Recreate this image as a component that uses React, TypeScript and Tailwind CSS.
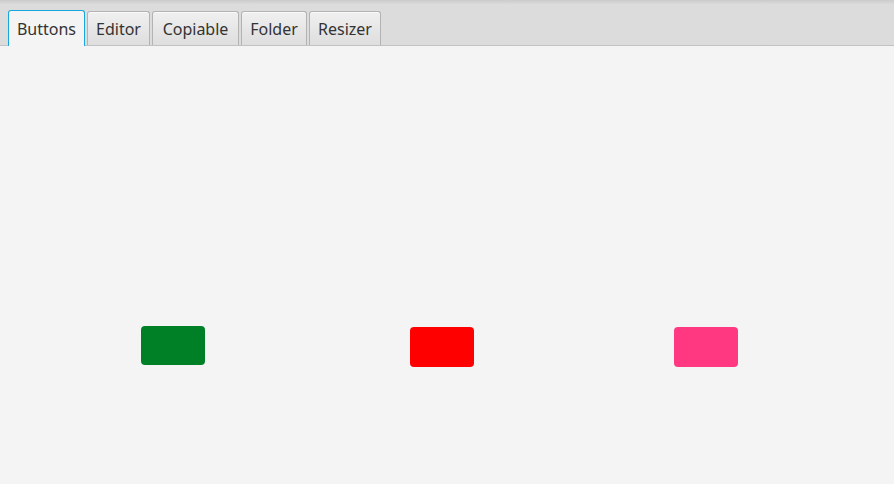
import React from "react";

const tabs = [
  { label: "Buttons", w: 77, active: true },
  { label: "Editor", w: 63 },
  { label: "Copiable", w: 87 },
  { label: "Folder", w: 66 },
  { label: "Resizer", w: 72 },
];

export default function App() {
  return (
    <div
      className="w-[894px] h-[484px] flex flex-col bg-[#f4f4f4] overflow-hidden"
      style={{ fontFamily: '"Noto Sans", "Open Sans", sans-serif' }}
    >
      <div className="h-[46px] flex items-end pl-[8px] gap-[2px] border-b border-[#c2c2c2] bg-gradient-to-b from-[#cbcbcb] via-[#dcdcdc] via-[10%] to-[#dcdcdc]">
        {tabs.map((t) =>
          t.active ? (
            <div
              key={t.label}
              style={{ width: t.w }}
              className="h-[36px] -mb-px flex items-center justify-center rounded-t-[3px] border border-b-0 border-[#18a7dc] bg-[#f4f4f4] text-[16px] text-[#333] pt-[1px]"
            >
              {t.label}
            </div>
          ) : (
            <div
              key={t.label}
              style={{ width: t.w }}
              className="h-[34px] flex items-center justify-center rounded-t-[3px] border border-b-0 border-[#b3b3b3] bg-gradient-to-b from-[#f0f0f0] to-[#dedede] text-[16px] text-[#333] pt-[1px] shadow-[inset_0_1px_0_#fafafa]"
            >
              {t.label}
            </div>
          )
        )}
      </div>
      <div className="flex-1 flex items-start pt-[280px] pl-[141px]">
        <div className="w-[64px] h-[39px] rounded-[4px] bg-[#008026]" />
        <div className="w-[64px] h-[40px] rounded-[4px] bg-[#ff0000] ml-[205px] mt-[1px]" />
        <div className="w-[64px] h-[40px] rounded-[4px] bg-[#ff3881] ml-[200px] mt-[1px]" />
      </div>
    </div>
  );
}
